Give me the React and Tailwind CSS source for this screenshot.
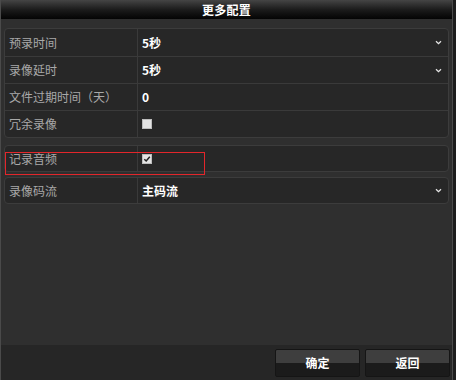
const font = { fontFamily: '"Noto Sans CJK SC", "Noto Sans", sans-serif' };

function Chevron() {
    return (
        <svg width="7" height="5" viewBox="0 0 7 5" className="shrink-0">
            <path d="M1 1.2 L3.5 3.6 L6 1.2" stroke="#e6e6e6" strokeWidth="1.3" fill="none" />
        </svg>
    );
}

function Box({ checked }) {
    return (
        <span className="w-[10px] h-[10px] bg-[#e4e4e4] border border-[#bdbdbd] flex items-center justify-center">
            {checked && (
                <svg width="8" height="8" viewBox="0 0 8 8">
                    <path d="M1.3 4.2 L3.2 6 L6.8 1.8" stroke="#222" strokeWidth="1.5" fill="none" />
                </svg>
            )}
        </span>
    );
}

function Row({ label, children, h = 'h-[27px]', first }) {
    return (
        <div className={`flex ${h} ${first ? '' : 'border-t border-[#3a3a3a]'}`}>
            <div className="w-[132px] pl-[4px] flex items-center text-[12px] text-[#a9a9a9]">{label}</div>
            <div className="flex-1 border-l border-[#3a3a3a] flex items-center pl-[4px] pr-[6px]">{children}</div>
        </div>
    );
}

function Value({ text, select }) {
    return (
        <>
            <span className="flex-1 text-[12px] font-bold text-white">{text}</span>
            {select && <Chevron />}
        </>
    );
}

export default function App() {
    return (
        <div className="w-[456px] h-[380px] bg-[#1d1d1d] overflow-hidden" style={font}>
            <div className="w-[453px] h-full bg-[#2f2f2f] border-l border-r border-[#4a4a4a] flex flex-col relative">
                {/* Header */}
                <div className="h-[19px] bg-gradient-to-b from-[#454545] via-[#1c1c1c] to-[#050505] flex items-center justify-center text-[12px] font-bold text-white tracking-wide">
                    更多配置
                </div>

                {/* Settings */}
                <div className="px-[3px] pt-[9px] flex flex-col">
                    <div className="border border-[#3c3c3c] rounded-[4px] bg-[#272727]">
                        <Row label="预录时间" first><Value text="5秒" select /></Row>
                        <Row label="录像延时"><Value text="5秒" select /></Row>
                        <Row label="文件过期时间（天）"><Value text="0" /></Row>
                        <Row label="冗余录像"><Box /></Row>
                    </div>
                    <div className="mt-[7px] border border-[#3c3c3c] rounded-[4px] bg-[#272727]">
                        <Row label="记录音频" h="h-[25px]" first><Box checked /></Row>
                    </div>
                    <div className="mt-[5px] border border-[#3c3c3c] rounded-[4px] bg-[#272727]">
                        <Row label="录像码流" h="h-[25px]" first><Value text="主码流" select /></Row>
                    </div>
                </div>

                <div className="flex-1" />

                {/* Footer */}
                <div className="h-[35px] bg-[#262626] flex justify-end gap-[5px] pt-[4px] pr-[2px]">
                    {['确定', '返回'].map((t) => (
                        <button
                            key={t}
                            className="w-[85px] h-[28px] rounded-[2px] border border-[#151515] bg-gradient-to-b from-[#3e3e3e] from-50% to-[#1b1b1b] to-50% text-[12px] font-bold text-white"
                        >
                            {t}
                        </button>
                    ))}
                </div>

                {/* highlight */}
                <div className="absolute left-[4px] top-[152px] w-[200px] h-[23px] border-[1.5px] border-[#e3262b]" />
            </div>
        </div>
    );
}
